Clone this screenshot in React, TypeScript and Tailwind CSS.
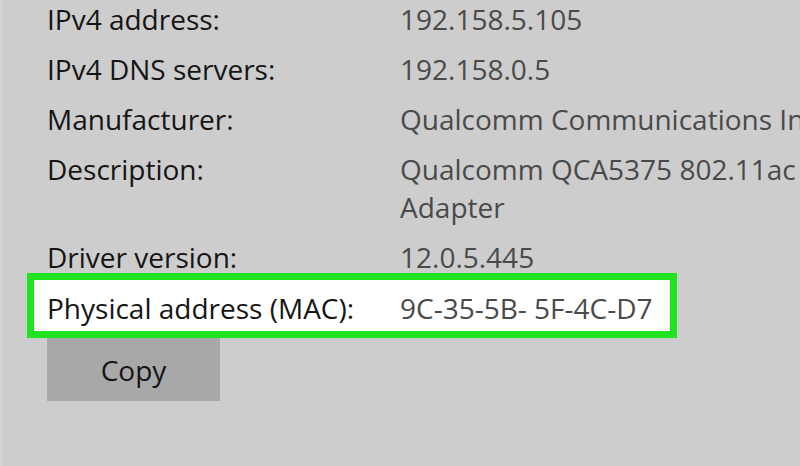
import React from "react";

const rows = [
	{ label: "IPv4 address:", value: ["192.158.5.105"] },
	{ label: "IPv4 DNS servers:", value: ["192.158.0.5"] },
	{ label: "Manufacturer:", value: ["Qualcomm Communications Inc."] },
	{
		label: "Description:",
		value: ["Qualcomm QCA5375 802.11ac Wireless Network", "Adapter"],
	},
	{ label: "Driver version:", value: ["12.0.5.445"] },
];

export default function App() {
	return (
		<main
			className="w-[800px] h-[466px] overflow-hidden bg-[#cdcdcd] border-l-[3px] border-[#d4d4d4] text-[28px] leading-[38px]"
			style={{ fontFamily: '"Open Sans", "Noto Sans", sans-serif' }}
		>
			<div className="pl-[44px] flex flex-col gap-3">
				{rows.map((row) => (
					<div key={row.label} className="flex whitespace-nowrap">
						<div className="w-[353px] shrink-0 text-[#151515]">{row.label}</div>
						<div className="text-[#4a4a4a]">
							{row.value.map((line) => (
								<div key={line}>{line}</div>
							))}
						</div>
					</div>
				))}
			</div>

			{/* highlighted MAC row */}
			<div className="ml-[24px] mt-[-3px] w-[650px] border-[7px] border-[#22e322] bg-white pl-[13px] pt-[9px] pb-[4px] flex whitespace-nowrap">
				<div className="w-[353px] shrink-0 text-[#151515]">Physical address (MAC):</div>
				<div className="text-[#4a4a4a]">9C-35-5B- 5F-4C-D7</div>
			</div>

			<div className="pl-[44px]">
				<button className="w-[173px] h-[63px] bg-[#a8a8a8] text-[#151515]">Copy</button>
			</div>
		</main>
	);
}
